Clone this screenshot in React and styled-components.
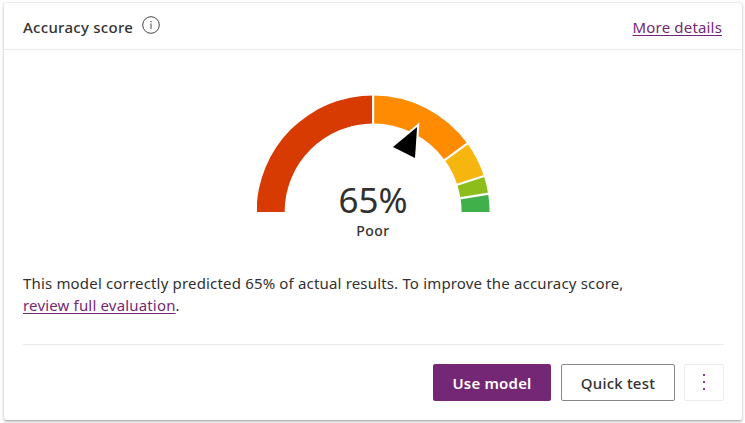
import React from "react";
import styled, { createGlobalStyle } from "styled-components";

const Global = createGlobalStyle`
  * { box-sizing: border-box; }
  body {
    margin: 0;
    background: #fff;
    color: #323130;
    font-family: "Noto Sans", "Open Sans", sans-serif;
  }
`;

const Page = styled.main`
  height: 423px;
  padding: 3px 3px 3px 4px;
  overflow: hidden;
`;

const Card = styled.section`
  height: 417px;
  display: flex;
  flex-direction: column;
  background: #fff;
  border-radius: 2px;
  box-shadow: 0 1.6px 3.6px rgba(0, 0, 0, 0.22), 0 0.3px 1.5px rgba(0, 0, 0, 0.16);
`;

const Header = styled.header`
  height: 47px;
  flex: none;
  display: flex;
  align-items: center;
  padding: 2px 20px 0 19px;
  border-bottom: 1px solid #eaeaea;
`;

const Title = styled.h2`
  margin: 0;
  font-size: 15px;
  line-height: 22px;
  font-weight: 500;
  letter-spacing: 0.28px;
  white-space: nowrap;
`;

const InfoIcon = styled.svg`
  display: block;
  margin: -5px 0 0 9px;
`;

const Link = styled.a`
  color: #742774;
  font-size: 15px;
  line-height: 22px;
  letter-spacing: 0.17px;
  text-decoration: underline;
  text-decoration-thickness: 1px;
  text-underline-offset: 2px;
  white-space: nowrap;
`;

const HeaderLink = styled(Link)`
  margin-left: auto;
`;

const Score = styled.div`
  flex: none;
  height: 219px;
  display: flex;
  flex-direction: column;
  align-items: center;
`;

const Gauge = styled.svg`
  display: block;
  flex: none;
  margin-top: 45px;
`;

const Value = styled.div`
  margin-top: -32px;
  font-size: 35px;
  line-height: 38px;
  font-weight: 400;
  letter-spacing: 0;
`;

const Rating = styled.div`
  margin-top: 2px;
  font-size: 14px;
  line-height: 20px;
  font-weight: 500;
  letter-spacing: 0.5px;
`;

const Summary = styled.p`
  margin: 3px 20px 0 19px;
  font-size: 15px;
  line-height: 22px;
  letter-spacing: 0.17px;
  white-space: nowrap;
`;

const Footer = styled.footer`
  margin: 28px 18px 0 19px;
  padding-top: 19px;
  border-top: 1px solid #eaeaea;
  display: flex;
  justify-content: flex-end;
`;

const Button = styled.button`
  width: ${(p) => p.$width}px;
  height: 37px;
  margin: 0 0 0 ${(p) => p.$gap || 0}px;
  padding: 0;
  display: flex;
  align-items: center;
  justify-content: center;
  border: 1px solid ${(p) => p.$border};
  border-radius: 2px;
  background: ${(p) => p.$background || "#fff"};
  color: ${(p) => p.$color || "#323130"};
  font: ${(p) => p.$weight || 500} 15px/22px "Noto Sans", "Open Sans", sans-serif;
  letter-spacing: 0.2px;
`;

const CX = 116.1;
const CY = 117;
const OUTER = 116.5;
const INNER = 88.5;

const bands = [
  { from: 0, to: 50, color: "#d83b01" },
  { from: 50, to: 80, color: "#ff8c00" },
  { from: 80, to: 90, color: "#f7b510" },
  { from: 90, to: 95, color: "#8cbd18" },
  { from: 95, to: 100, color: "#40b04a" },
];

function point(radius, percent) {
  const angle = Math.PI * (1 - percent / 100);
  return [CX + radius * Math.cos(angle), CY - radius * Math.sin(angle)];
}

function bandPath({ from, to }) {
  return `M${point(OUTER, from)} A${OUTER} ${OUTER} 0 0 1 ${point(OUTER, to)} L${point(INNER, to)} A${INNER} ${INNER} 0 0 0 ${point(INNER, from)}Z`;
}

function AccuracyGauge() {
  return (
    <Gauge width="233" height="118" viewBox="0 0 233 118" aria-hidden="true">
      {bands.map((band) => (
        <path key={band.from} d={bandPath(band)} fill={band.color} />
      ))}
      {bands.slice(1).map(({ from }) => {
        const [x1, y1] = point(OUTER + 1, from);
        const [x2, y2] = point(INNER - 1, from);
        return <line key={from} x1={x1} y1={y1} x2={x2} y2={y2} stroke="#fff" strokeWidth="2.2" />;
      })}
      <path d="M160.1 32 L136 52 L158 63Z" fill="#000" stroke="#fff" strokeWidth="4" strokeMiterlimit="10" paintOrder="stroke" />
    </Gauge>
  );
}

export default function App() {
  return (
    <Page>
      <Global />
      <Card>
        <Header>
          <Title>Accuracy score</Title>
          <InfoIcon width="18" height="18" viewBox="0 0 18 18">
            <circle cx="9" cy="9" r="8.3" fill="none" stroke="#484644" />
            <path d="M9 7.5V13" stroke="#484644" />
            <path d="M8.4 5h1.2v1.2H8.4z" fill="#484644" />
          </InfoIcon>
          <HeaderLink>More details</HeaderLink>
        </Header>
        <Score>
          <AccuracyGauge />
          <Value>65%</Value>
          <Rating>Poor</Rating>
        </Score>
        <Summary>
          This model correctly predicted 65% of actual results. To improve the accuracy score,
          <br />
          <Link>review full evaluation</Link>.
        </Summary>
        <Footer>
          <Button $width={118} $border="#742774" $background="#742774" $color="#fff" $weight={600}>
            Use model
          </Button>
          <Button $width={114} $gap={10} $border="#8a8886">
            Quick test
          </Button>
          <Button $width={40} $gap={9} $border="#edebe9" aria-label="More options">
            <svg width="4" height="18" viewBox="0 0 4 18" fill="#8a3a8a">
              <path d="M1 0h2v2H1zM1 7h2v2H1zM1 14h2v2H1z" />
            </svg>
          </Button>
        </Footer>
      </Card>
    </Page>
  );
}
